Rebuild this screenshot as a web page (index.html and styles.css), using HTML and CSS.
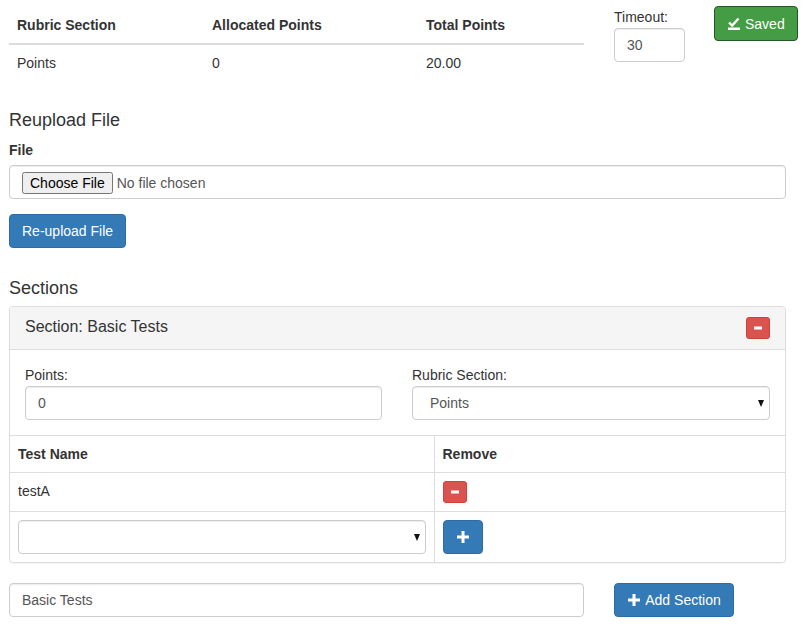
FILE: index.html
```html
<!DOCTYPE html>
<html>
<head>
<meta charset="utf-8">
<link rel="stylesheet" href="styles.css">
</head>
<body>
<div class="page">
  <div class="top-row">
    <div class="main-col">
      <table class="summary">
        <thead>
          <tr><th class="c1">Rubric Section</th><th class="c2">Allocated Points</th><th class="c3">Total Points</th></tr>
        </thead>
        <tbody>
          <tr><td>Points</td><td>0</td><td>20.00</td></tr>
        </tbody>
      </table>
    </div>
    <div class="timeout-col">
      <label class="plain-label">Timeout:</label>
      <input class="form-control timeout-input" type="text" value="30">
    </div>
    <div class="saved-col">
      <button class="btn btn-success">
        <svg class="icon" width="14" height="14" viewBox="0 0 14 14"><path d="M2 5.5 L5.2 8.6 L11.5 1.5" fill="none" stroke="#fff" stroke-width="2.4"/><rect x="1" y="10.5" width="12" height="2.5" fill="#fff"/></svg>
        Saved
      </button>
    </div>
  </div>

  <h4 class="heading">Reupload File</h4>
  <div class="form-group">
    <label class="bold-label">File</label>
    <input class="form-control file-input" type="file">
  </div>
  <button class="btn btn-primary">Re-upload File</button>

  <h4 class="heading sections-title">Sections</h4>
  <div class="panel">
    <div class="panel-heading">
      <span class="panel-title">Section: Basic Tests</span>
      <button class="btn btn-danger btn-xs">
        <svg class="icon-xs" width="12" height="12" viewBox="0 0 12 12"><rect x="2" y="4.5" width="8" height="3" fill="#fff"/></svg>
      </button>
    </div>
    <div class="panel-body">
      <div class="field field-left">
        <label class="plain-label">Points:</label>
        <input class="form-control" type="text" value="0">
      </div>
      <div class="field">
        <label class="plain-label">Rubric Section:</label>
        <div class="select-wrap">
          <select class="form-control"><option>Points</option></select>
          <span class="caret"></span>
        </div>
      </div>
    </div>
    <table class="tests">
      <thead>
        <tr><th class="name-col">Test Name</th><th>Remove</th></tr>
      </thead>
      <tbody>
        <tr>
          <td>testA</td>
          <td><button class="btn btn-danger btn-xs"><svg class="icon-xs" width="12" height="12" viewBox="0 0 12 12"><rect x="2" y="4.5" width="8" height="3" fill="#fff"/></svg></button></td>
        </tr>
        <tr>
          <td>
            <div class="select-wrap">
              <select class="form-control"><option></option></select>
              <span class="caret"></span>
            </div>
          </td>
          <td><button class="btn btn-primary btn-icon"><svg class="icon" width="14" height="14" viewBox="0 0 14 14"><rect x="1" y="5.5" width="12" height="3" fill="#fff"/><rect x="5.5" y="1" width="3" height="12" fill="#fff"/></svg></button></td>
        </tr>
      </tbody>
    </table>
  </div>

  <div class="bottom-row">
    <div class="main-col">
      <input class="form-control" type="text" value="Basic Tests">
    </div>
    <button class="btn btn-primary add-btn"><svg class="icon" width="14" height="14" viewBox="0 0 14 14"><rect x="1" y="5.5" width="12" height="3" fill="#fff"/><rect x="5.5" y="1" width="3" height="12" fill="#fff"/></svg> Add Section</button>
  </div>
</div>
</body>
</html>
```

FILE: styles.css
```css
* { box-sizing: border-box; }
html, body { margin: 0; padding: 0; background: #fff; }
body {
  font-family: "Liberation Sans", Arial, sans-serif;
  font-size: 14px;
  line-height: 20px;
  color: #333;
}
.page {
  padding: 7px 0 20px 9px;
  width: 786px;
}
.top-row {
  display: flex;
  align-items: flex-start;
}
.main-col { width: 575px; flex: none; }
.timeout-col { margin-left: 30px; width: 71px; flex: none; }
.saved-col { margin-left: 29px; margin-top: -1px; flex: none; }

table { border-collapse: collapse; border-spacing: 0; }
.summary { width: 575px; margin-bottom: 19px; }
.summary th {
  text-align: left;
  font-weight: bold;
  padding: 8px;
  border-bottom: 2px solid #ddd;
}
.summary td { padding: 8px; border-top: 1px solid #ddd; }
.summary .c1 { width: 195px; }
.summary .c2 { width: 214px; }

.plain-label { display: block; font-weight: normal; margin-bottom: 1px; }
.bold-label { display: block; font-weight: bold; margin-bottom: 5px; }

.form-control {
  display: block;
  width: 100%;
  height: 34px;
  padding: 6px 12px;
  font-family: inherit;
  font-size: 14px;
  line-height: 20px;
  color: #555;
  background: #fff;
  border: 1px solid #ccc;
  border-radius: 4px;
  box-shadow: inset 0 1px 1px rgba(0,0,0,.075);
}
select.form-control {
  -webkit-appearance: none;
  appearance: none;
  padding: 6px 24px 6px 17px;
}
.select-wrap { position: relative; }
.caret {
  position: absolute;
  right: 6px;
  top: 14px;
  width: 0;
  height: 0;
  border-left: 3.5px solid transparent;
  border-right: 3.5px solid transparent;
  border-top: 7px solid #111;
  pointer-events: none;
}
.file-input { width: 777px; padding: 6px 12px; }
.timeout-input { width: 71px; }

.btn {
  display: inline-flex;
  align-items: center;
  justify-content: center;
  gap: 4px;
  height: 34px;
  padding: 6px 12px;
  font-family: inherit;
  font-size: 14px;
  line-height: 20px;
  border: 1px solid transparent;
  border-radius: 4px;
  color: #fff;
  cursor: pointer;
  white-space: nowrap;
}
.btn-success { background: #449d44; border-color: #255625; height: 35px; }
.btn-primary { background: #337ab7; border-color: #2e6da4; }
.btn-danger { background: #d9534f; border-color: #d43f3a; }
.btn-xs {
  height: 22px;
  width: 24px;
  padding: 1px 5px;
  border-radius: 3px;
}
.btn-icon { width: 40px; }
.icon, .icon-xs { display: block; flex: none; }

.heading {
  font-size: 18px;
  font-weight: 500;
  line-height: 20px;
  margin: 10px 0 10px;
}
.form-group { width: 777px; margin-bottom: 15px; }
.sections-title { margin-top: 30px; margin-bottom: 8px; }

.panel {
  width: 777px;
  border: 1px solid #ddd;
  border-radius: 4px;
  box-shadow: 0 1px 1px rgba(0,0,0,.05);
  margin-bottom: 20px;
  overflow: hidden;
}
.panel-heading {
  display: flex;
  justify-content: space-between;
  align-items: flex-start;
  padding: 10px 15px;
  background: #f5f5f5;
  border-bottom: 1px solid #ddd;
  height: 43px;
}
.panel-title { font-size: 16px; line-height: 17px; margin-top: 1px; color: #333; }
.panel-body {
  display: flex;
  gap: 30px;
  padding: 15px 15px 15px;
}
.field { flex: 1; }
.field-left { flex: none; width: 357px; }

.tests { width: 100%; }
.tests th, .tests td {
  text-align: left;
  padding: 8px;
  border-top: 1px solid #ddd;
  vertical-align: top;
}
.tests th { font-weight: bold; }
.tests .name-col { width: 424px; }
.tests th:first-child, .tests td:first-child { border-right: 1px solid #ddd; }

.bottom-row { display: flex; align-items: flex-start; }
.add-btn { margin-left: 30px; width: 120px; }
```
